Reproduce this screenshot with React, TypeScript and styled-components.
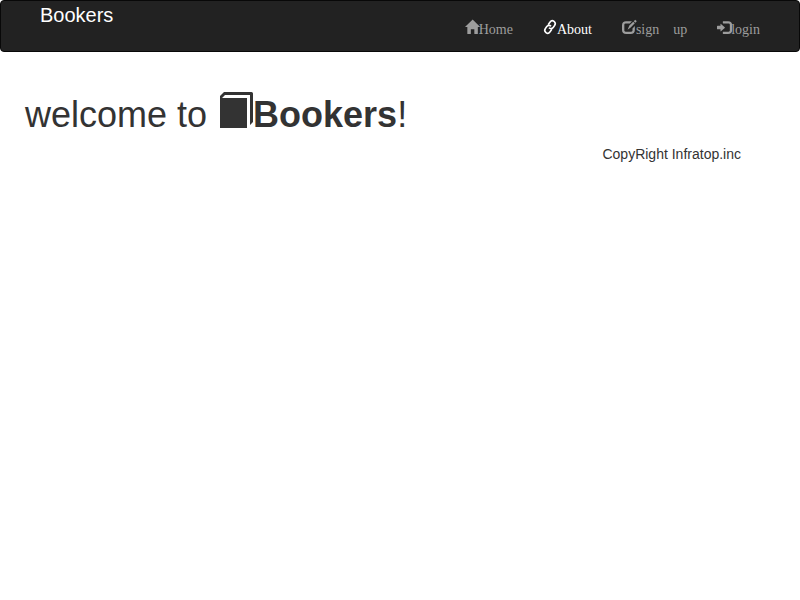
import React from "react";
import styled, { createGlobalStyle } from "styled-components";

const GlobalStyle = createGlobalStyle`
  * { box-sizing: border-box; }
  body {
    margin: 0;
    background: #fff;
    color: #333;
    font: 14px/20px "Liberation Sans", Arial, sans-serif;
  }
`;

const Navbar = styled.header`
  display: flex;
  justify-content: space-between;
  align-items: flex-start;
  height: 52px;
  padding: 0 39px;
  background: #222;
  border: 1px solid #080808;
  border-radius: 4px;
`;

const Brand = styled.a`
  padding-top: 4px;
  color: #fff;
  font-size: 20px;
  line-height: 20px;
`;

const Menu = styled.nav`
  display: flex;
  gap: 30px;
  padding-top: 19px;
`;

const MenuLink = styled.a<{ $active?: boolean }>`
  display: flex;
  align-items: flex-start;
  color: ${(p) => (p.$active ? "#fff" : "#9d9d9d")};
  font: 14px/14px "Liberation Serif", "Noto Sans CJK JP", serif;
  white-space: pre;
`;

const MenuIcon = styled.svg`
  width: 14px;
  height: 14px;
  overflow: visible;
  fill: currentColor;
`;

const MenuText = styled.span`
  padding-top: 3px;
`;

const Main = styled.main`
  padding: 43px 59px 0 25px;
`;

const Title = styled.h1`
  display: flex;
  align-items: flex-start;
  margin: 0;
  font-size: 36px;
  font-weight: 400;
  line-height: 40px;
  white-space: pre;
`;

const BookIcon = styled.svg`
  width: 36px;
  height: 36px;
  margin-top: -3px;
  fill: #333;
`;

const Footer = styled.footer`
  margin-top: 9px;
  text-align: right;
`;

const HOME =
  "M18 618l620 608q8 7 18.500 7t17.500 -7l608 -608q8 -8 5.500 -13t-12.500 -5h-175v-575q0 -10 -7.500 -17.500t-17.500 -7.500h-250q-10 0 -17.500 7.500t-7.500 17.500v375h-300v-375q0 -10 -7.500 -17.500t-17.500 -7.500h-250q-10 0 -17.500 7.500t-7.500 17.500v575h-175q-10 0 -12.500 5t5.500 13z";
const EDIT =
  "M350 1100h400q50 0 105 -13l-187 -187h-368q-41 0 -70.500 -29.500t-29.500 -70.500v-500q0 -41 29.500 -70.500t70.500 -29.500h500q41 0 70.500 29.500t29.500 70.500v182l200 200v-332q0 -165 -92.500 -257.500t-257.500 -92.500h-400q-165 0 -257.500 92.500t-92.500 257.500v400q0 165 92.500 257.500t257.500 92.500zM1009 1103l103 103q7 7 17.500 7t17.500 -7l101 -101q7 -7 7 -17.500t-7 -17.500l-103 -103zM962 1056l136 -136l-355 -355l-263 -195l148 352z";
const LOGIN =
  "M550 1100h400q165 0 257.500 -92.500t92.500 -257.500v-400q0 -165 -92.500 -257.500t-257.500 -92.500h-400q-21 0 -35.500 14.500t-14.500 35.500v100q0 21 14.500 35.500t35.500 14.500h450q41 0 70.500 29.500t29.500 70.500v500q0 41 -29.500 70.500t-70.500 29.500h-450q-21 0 -35.500 14.500t-14.500 35.500v100q0 21 14.500 35.500t35.500 14.500zM338 867l324 -284q16 -14 16 -33t-16 -33l-324 -284q-16 -14 -27 -9t-11 26v150h-250q-21 0 -35.500 14.500t-14.500 35.500v200q0 21 14.500 35.500t35.500 14.500h250v150q0 21 11 26t27 -9z";

const Glyph = ({ d }: { d: string }) => (
  <MenuIcon viewBox="0 0 1200 1200" aria-hidden="true">
    <path d={d} transform="translate(0 1200) scale(1 -1)" />
  </MenuIcon>
);

const LinkGlyph = () => (
  <MenuIcon viewBox="0 0 24 24" aria-hidden="true">
    <g
      fill="none"
      stroke="currentColor"
      strokeWidth="2.900"
      transform="translate(12 12) rotate(-8) scale(0.960 1) translate(-12 -12)"
    >
      <path d="M10 13a5 5 0 0 0 7.540.540l3-3a5 5 0 0 0-7.070-7.070l-4.200 4.200" />
      <path d="M14 11a5 5 0 0 0-7.540-.540l-3 3a5 5 0 0 0 7.070 7.070l4.200-4.200" />
    </g>
  </MenuIcon>
);

export default function App() {
  return (
    <>
      <GlobalStyle />
      <Navbar>
        <Brand>Bookers</Brand>
        <Menu>
          <MenuLink>
            <Glyph d={HOME} />
            <MenuText>Home</MenuText>
          </MenuLink>
          <MenuLink $active>
            <LinkGlyph />
            <MenuText>About</MenuText>
          </MenuLink>
          <MenuLink>
            <Glyph d={EDIT} />
            <MenuText>{"sign\u3000up"}</MenuText>
          </MenuLink>
          <MenuLink>
            <Glyph d={LOGIN} />
            <MenuText>login</MenuText>
          </MenuLink>
        </Menu>
      </Navbar>
      <Main>
        <Title>
          <span>welcome to </span>
          <BookIcon viewBox="0 0 36 36" aria-hidden="true">
            <path d="M3 36V4L7 0H34.500Q36 0 36 1.500V30L33 33V3H8L5 6H30V36Z" />
          </BookIcon>
          <strong>Bookers</strong>
          <span>!</span>
        </Title>
        <Footer>CopyRight Infratop.inc</Footer>
      </Main>
    </>
  );
}
